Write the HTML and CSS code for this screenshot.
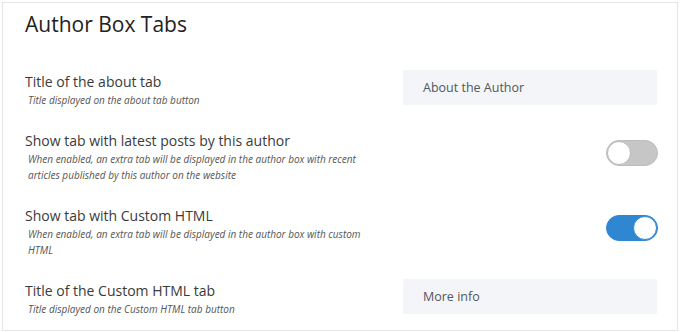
FILE: index.html
```html
<!DOCTYPE html>
<html lang="en">
<head>
    <meta charset="UTF-8">
    <meta name="viewport" content="width=device-width, initial-scale=1.0">
    <title>Author Box Tabs</title>
    <link rel="stylesheet" href="styles.css">
</head>
<body>
    <section class="panel">
        <h2>Author Box Tabs</h2>
        <div class="row">
            <div class="info">
                <div class="label">Title of the about tab</div>
                <div class="desc">Title displayed on the about tab button</div>
            </div>
            <div class="field">About the Author</div>
        </div>
        <div class="row">
            <div class="info">
                <div class="label">Show tab with latest posts by this author</div>
                <div class="desc">When enabled, an extra tab will be displayed in the author box with recent articles published by this author on the website</div>
            </div>
            <div class="toggle"><span class="knob"></span></div>
        </div>
        <div class="row">
            <div class="info">
                <div class="label">Show tab with Custom HTML</div>
                <div class="desc">When enabled, an extra tab will be displayed in the author box with custom HTML</div>
            </div>
            <div class="toggle on"><span class="knob"></span></div>
        </div>
        <div class="row">
            <div class="info">
                <div class="label">Title of the Custom HTML tab</div>
                <div class="desc">Title displayed on the Custom HTML tab button</div>
            </div>
            <div class="field">More info</div>
        </div>
    </section>
</body>
</html>
```

FILE: styles.css
```css
body { margin: 0; background: #fff; font-family: "Open Sans", "Noto Sans", sans-serif; color: #333; }
.panel { margin: 2px 2px 0 2px; border: 1px solid #e6e6e6; padding: 6px 20px 12px 22px; height: 329px; box-sizing: border-box; }
h2 { font-size: 21px; font-weight: 400; color: #222; margin: 0 0 33px 0; line-height: 30px; }
.row { display: flex; justify-content: space-between; align-items: flex-start; margin-bottom: 23px; }
.info { width: 345px; }
.label { font-size: 14px; line-height: 20px; color: #3a3a3a; }
.desc { font-size: 10px; line-height: 16px; font-style: italic; color: #555; padding-left: 3px; }
.field { width: 254px; height: 35px; box-sizing: border-box; margin-top: -2px; background: #f4f5f8; color: #50575e; font-size: 12.5px; line-height: 35px; padding-left: 20px; }
.toggle { width: 52px; height: 26px; box-sizing: border-box; margin-top: 9px; margin-right: -1px; border-radius: 13px; background: #c6c6c6; border: 1px solid #bdbdbd; display: flex; align-items: center; }
.toggle .knob { width: 24px; height: 24px; box-sizing: border-box; border-radius: 50%; background: #fff; border: 1px solid #b9b9b9; }
.toggle.on { background: #2f86d1; border-color: #2f86d1; justify-content: flex-end; }
.toggle.on .knob { border-color: #2f86d1; }
```
